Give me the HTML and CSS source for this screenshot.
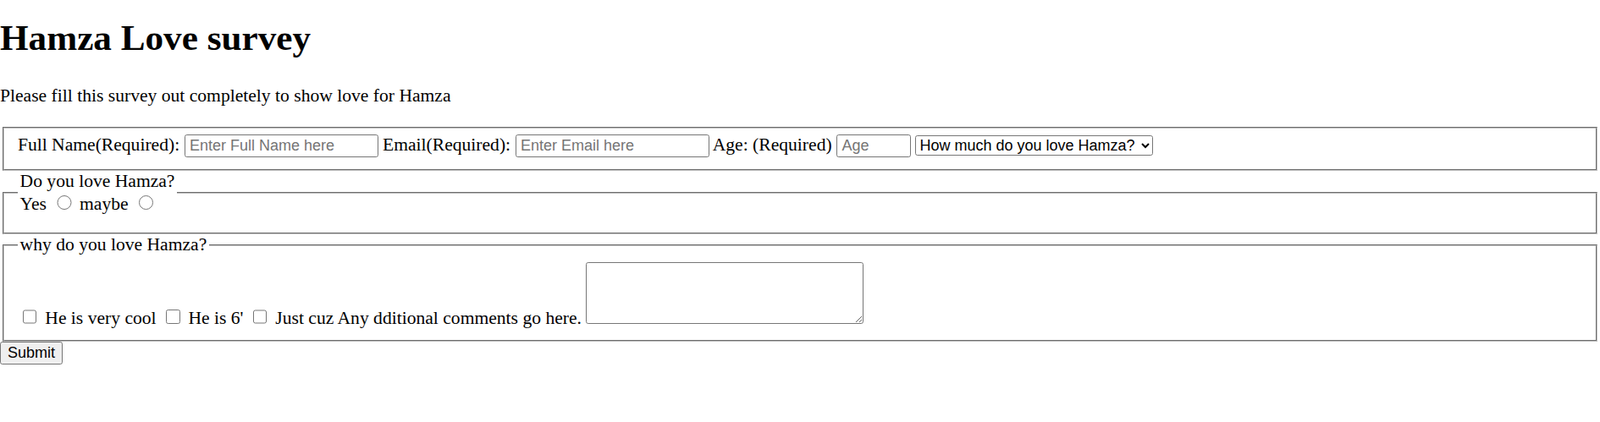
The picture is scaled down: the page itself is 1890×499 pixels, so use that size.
FILE: index.html
```html
<!DOCTYPE html>
<html lang="en">
<head>
<meta charset="utf-8">
<title>Hamza Love survey</title>
<link rel="stylesheet" href="styles.css">
</head>
<body class="page">
<h1 class="title">Hamza Love survey</h1>
<p class="intro">Please fill this survey out completely to show love for Hamza</p>
<form class="survey">
  <fieldset class="group">
    <label class="field">Full Name(Required): <input class="text-input name-input" type="text" placeholder="Enter Full Name here"></label>
    <label class="field">Email(Required): <input class="text-input email-input" type="email" placeholder="Enter Email here"></label>
    <label class="field">Age: (Required) <input class="text-input age-input" type="text" placeholder="Age"></label>
    <select class="love-select">
      <option>How much do you love Hamza?</option>
      <option>A lot</option>
      <option>So much</option>
    </select>
  </fieldset>
  <fieldset class="group">
    <legend class="legend">Do you love Hamza?<br><label class="choice">Yes <input class="radio" type="radio" name="love"></label> <label class="choice">maybe <input class="radio" type="radio" name="love"></label></legend>
  </fieldset>
  <fieldset class="group">
    <legend class="legend">why do you love Hamza?</legend>
    <input class="check" type="checkbox" id="cool"> <label for="cool">He is very cool</label>
    <input class="check" type="checkbox" id="tall"> <label for="tall">He is 6'</label>
    <input class="check" type="checkbox" id="cuz"> <label for="cuz">Just cuz</label>
    <label class="comments">Any dditional comments go here. <textarea class="comment-box"></textarea></label>
  </fieldset>
  <input class="submit" type="submit" value="Submit">
</form>
</body>
</html>
```
FILE: styles.css
```css
.page {
  margin: 0;
  font-family: "Liberation Serif", "Times New Roman", serif;
  font-size: 21.6px;
  color: #000;
  background: #fff;
}

.title {
  font-size: 43.2px;
  font-weight: bold;
  margin: 20px 0 31.7px;
}

.intro {
  margin: 0 0 24px;
}

.survey {
  margin: 0;
}

.group {
  margin: 0 2.7px;
  padding: 7.56px 16.2px 13.5px;
  border: 2.7px groove #c0c0c0;
}

.legend {
  padding: 0 2.7px;
}

.text-input {
  box-sizing: border-box;
  font-family: "Liberation Sans", Arial, sans-serif;
  font-size: 18px;
  height: 26.7px;
  padding: 1.35px 5.4px;
  border: 1.35px solid #767676;
  border-radius: 2.7px;
  margin: 0;
}

.text-input::placeholder {
  color: #757575;
}

.name-input,
.email-input {
  width: 229px;
}

.age-input {
  width: 88px;
}

.love-select {
  box-sizing: border-box;
  font-family: "Liberation Sans", Arial, sans-serif;
  font-size: 18px;
  width: 281px;
  height: 24px;
  border: 1.35px solid #767676;
  border-radius: 2.7px;
  background: #fff;
  color: #000;
  margin: 0;
}

.radio {
  width: 17.5px;
  height: 17.5px;
  margin: 4px 4px 0 6.75px;
}

.check {
  width: 16.5px;
  height: 16.5px;
  margin: 4px 4.5px 4px 6px;
}

.comment-box {
  box-sizing: border-box;
  width: 328px;
  height: 73px;
  margin: 0;
  border: 1.35px solid #767676;
  border-radius: 2.7px;
  font-family: "Liberation Mono", monospace;
  font-size: 18px;
}

.submit {
  box-sizing: border-box;
  font-family: "Liberation Sans", Arial, sans-serif;
  font-size: 18px;
  width: 74px;
  height: 27px;
  padding: 1.35px 8px;
  border: 1.35px solid #767676;
  border-radius: 2.7px;
  background: #efefef;
  color: #000;
  margin: 0;
}
```
